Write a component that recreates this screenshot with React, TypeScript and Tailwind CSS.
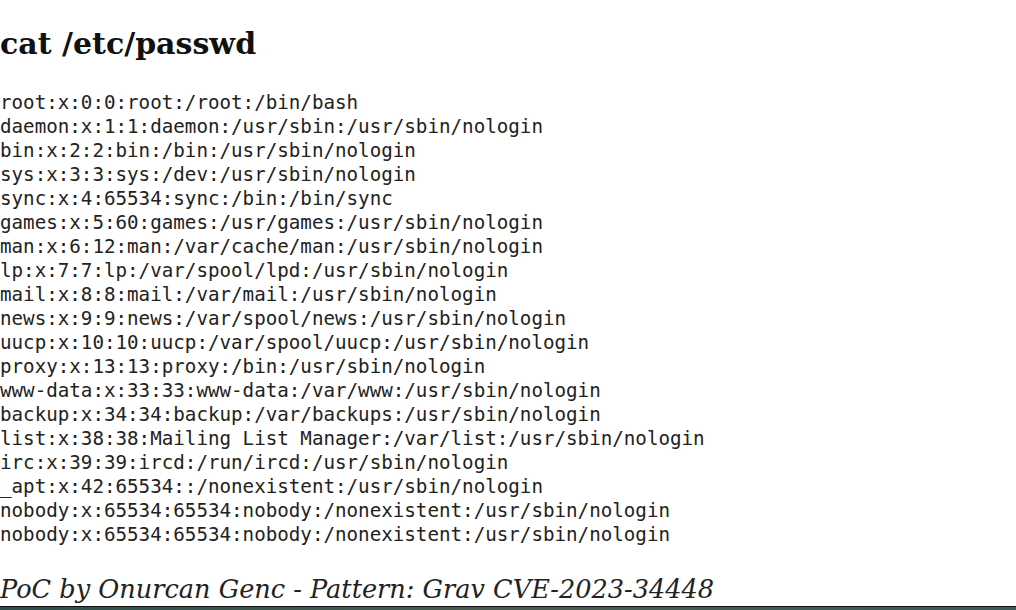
const lines = [
  "root:x:0:0:root:/root:/bin/bash",
  "daemon:x:1:1:daemon:/usr/sbin:/usr/sbin/nologin",
  "bin:x:2:2:bin:/bin:/usr/sbin/nologin",
  "sys:x:3:3:sys:/dev:/usr/sbin/nologin",
  "sync:x:4:65534:sync:/bin:/bin/sync",
  "games:x:5:60:games:/usr/games:/usr/sbin/nologin",
  "man:x:6:12:man:/var/cache/man:/usr/sbin/nologin",
  "lp:x:7:7:lp:/var/spool/lpd:/usr/sbin/nologin",
  "mail:x:8:8:mail:/var/mail:/usr/sbin/nologin",
  "news:x:9:9:news:/var/spool/news:/usr/sbin/nologin",
  "uucp:x:10:10:uucp:/var/spool/uucp:/usr/sbin/nologin",
  "proxy:x:13:13:proxy:/bin:/usr/sbin/nologin",
  "www-data:x:33:33:www-data:/var/www:/usr/sbin/nologin",
  "backup:x:34:34:backup:/var/backups:/usr/sbin/nologin",
  "list:x:38:38:Mailing List Manager:/var/list:/usr/sbin/nologin",
  "irc:x:39:39:ircd:/run/ircd:/usr/sbin/nologin",
  "_apt:x:42:65534::/nonexistent:/usr/sbin/nologin",
  "nobody:x:65534:65534:nobody:/nonexistent:/usr/sbin/nologin",
  "nobody:x:65534:65534:nobody:/nonexistent:/usr/sbin/nologin",
];

export default function App() {
  return (
    <div className="flex h-[610px] w-[1016px] flex-col overflow-hidden bg-white text-[#111]">
      <div className="flex-1">
        {/* heading */}
        <h2 className="mt-[27px] font-['DejaVu_Serif',serif] text-[30px] font-bold leading-[34px]">
          cat /etc/passwd
        </h2>

        {/* file dump */}
        <pre className="mt-[30px] font-['DejaVu_Sans_Mono',monospace] text-[19.2px] leading-[24px] text-[#222]">
          {lines.join("\n")}
        </pre>

        <p className="mt-[27px] font-['DejaVu_Serif',serif] text-[25.6px] italic leading-[30px] text-[#222]">
          PoC by Onurcan Genc - Pattern: Grav CVE-2023-34448
        </p>
      </div>

      {/* bottom window edge */}
      <div className="h-[1px] bg-[#111]" />
      <div className="h-[3px] bg-gradient-to-r from-[#2f4f4c] via-[#4b5e52] to-[#3e5a5a]" />
    </div>
  );
}
